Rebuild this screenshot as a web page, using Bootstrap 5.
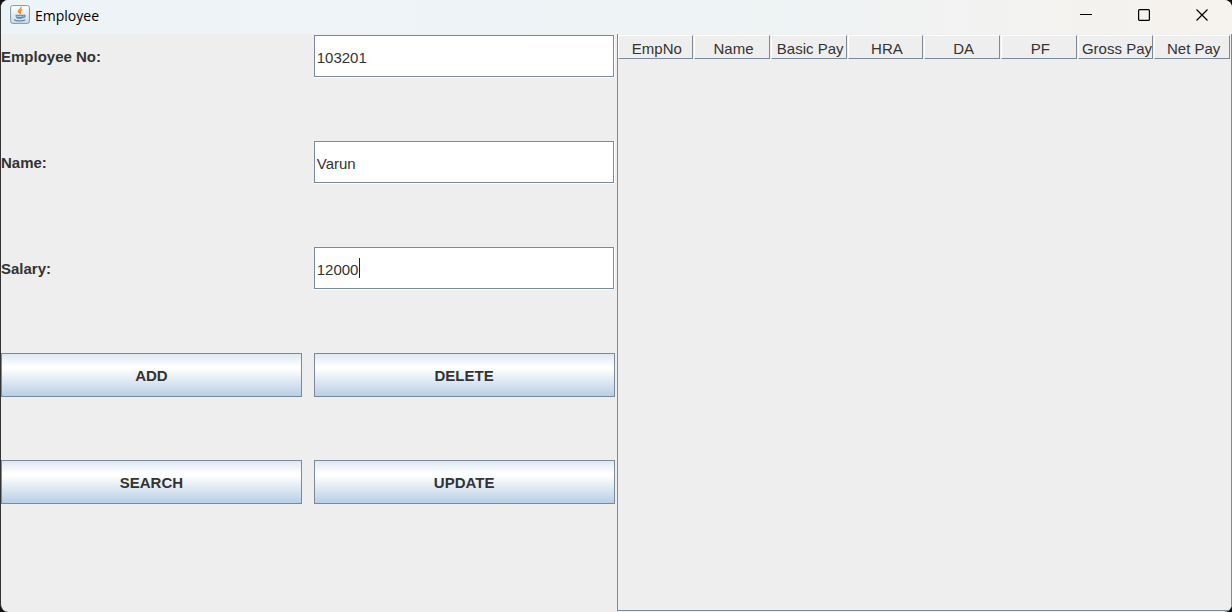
<!DOCTYPE html>
<html lang="en">
<head>
<meta charset="utf-8">
<meta name="viewport" content="width=device-width, initial-scale=1">
<title>Employee</title>
<link href="https://cdn.jsdelivr.net/npm/bootstrap@5.3.0/dist/css/bootstrap.min.css" rel="stylesheet">
<style>
  :root { --line: #7a8a99; --panel: #eeeeee; --ink: #333333; }
  body { background: #111; font: 15px/18px "Liberation Sans", Arial, sans-serif; color: var(--ink); }
  .app-window { background: var(--panel); border-left: 1px solid #333; border-radius: 8px; overflow: hidden; }
  .title-bar { height: 34px; padding: 0 1px 0 9px; background: linear-gradient(90deg, #edf4f8, #eef3f5 60%, #f6f2ed); color: #000; }
  .title-text { font: 14px/20px "Open Sans", "Noto Sans", sans-serif; padding: 6px 0 0 5px; }
  .win-btn { width: 58px; height: 30px; padding: 0; border: 0; background: none; display: flex; align-items: center; justify-content: center; }
  .form-grid { display: grid; grid-template-columns: 1fr 1fr; column-gap: 12px; row-gap: 63px; padding: 1px 2px 0 0; align-content: start; }
  .form-grid label { font-weight: 700; align-self: center; padding-top: 1px; }
  .metal-field { height: 43px; border-bottom: 1px solid #fff; border-right: 1px solid #fff; }
  .metal-field input { width: 100%; height: 42px; border: 1px solid var(--line); border-radius: 0; padding: 2px 2px 0; font: inherit; color: var(--ink); background: #fff; outline: 0; display: block; }
  .caret { left: 45px; top: 11px; width: 1px; height: 20px; background: #222; }
  .metal-btn { height: 44px; border: 1px solid var(--line); border-radius: 0; padding: 1px 0 0; font: inherit; font-weight: 700; color: var(--ink); background: linear-gradient(#dde8f3 0, #fff 30%, #fff 34%, #dbe6f1 68%, #b8cfe5 100%); }
  .table-pane { border: solid var(--line); border-width: 0 1px 1px; margin-bottom: 1px; }
  .metal-table { width: 100%; table-layout: fixed; border-collapse: separate; border-spacing: 0; }
  .metal-table th { height: 25px; padding: 1px 0 0; font-weight: 400; text-align: center; white-space: nowrap; }
  .metal-table th span { display: block; height: 24px; margin-right: 1px; padding: 4px 0 0 3px; border: solid; border-width: 1px; border-color: #fff var(--line) var(--line) #fff; }
</style>
</head>
<body>
<div class="app-window d-flex flex-column min-vh-100">
  <header class="title-bar d-flex align-items-start">
    <svg class="mt-1 flex-shrink-0" width="20" height="21" viewBox="0 0 20 21" aria-hidden="true">
      <defs><linearGradient id="tile" x1="0" y1="0" x2="0" y2="1"><stop stop-color="#fff"/><stop offset="1" stop-color="#ccdbe5"/></linearGradient></defs>
      <rect x=".6" y="1.6" width="18.8" height="17.8" rx="2" fill="url(#tile)" stroke="#8496a4"/>
      <path d="M10.8 3c1.400 2-3.200 2.800-2.500 4.500.3.900.9 1.200 1.500 1.900M12.300 5.700c-2 .8-3 1.600-2 2.700.5.500.3 1-.2 1.400" fill="none" stroke="#ee8633" stroke-width="1.400"/>
      <path d="M5.500 10.800h8c0 2.600-1 4-2.500 4H8c-1.600 0-2.500-1.400-2.500-4z" fill="#6289a5"/>
      <path d="M13.400 11.300c2.600-.6 2.300 2.200-.8 2.400M4 15.800c2.800 1.500 8.500 1.500 11.300 0" fill="none" stroke="#6289a5" stroke-width="1.200"/>
      <path d="M6.500 12.300h5.500" stroke="#dce8ef" stroke-width=".8"/>
    </svg>
    <span class="title-text" id="win-title">Employee</span>
    <div class="d-flex ms-auto">
      <button class="win-btn" type="button" aria-label="Minimize"><svg width="12" height="12" viewBox="0 0 12 12"><path d="M0 5.500h12" stroke="#000"/></svg></button>
      <button class="win-btn" type="button" aria-label="Maximize"><svg width="12" height="12" viewBox="0 0 12 12"><rect x=".6" y=".6" width="10.800" height="10.800" rx="1" fill="none" stroke="#000" stroke-width="1.200"/></svg></button>
      <button class="win-btn" type="button" aria-label="Close"><svg width="12" height="12" viewBox="0 0 12 12"><path d="M.5.5l11 11M11.500.5l-11 11" stroke="#000" stroke-width="1.200"/></svg></button>
    </div>
  </header>
  <main class="row g-0 flex-grow-1">
    <form class="col-6 form-grid" aria-labelledby="win-title">
      <label for="empNo">Employee No:</label>
      <div class="metal-field"><input id="empNo" type="text" value="103201"></div>
      <label for="empName">Name:</label>
      <div class="metal-field"><input id="empName" type="text" value="Varun"></div>
      <label for="salary">Salary:</label>
      <div class="metal-field position-relative"><input id="salary" type="text" value="12000"><span class="caret position-absolute"></span></div>
      <button class="metal-btn" type="button">ADD</button>
      <button class="metal-btn" type="button">DELETE</button>
      <button class="metal-btn" type="button">SEARCH</button>
      <button class="metal-btn" type="button">UPDATE</button>
    </form>
    <section class="col-6 d-flex">
      <div class="table-pane flex-fill">
        <table class="metal-table">
          <thead><tr>
            <th scope="col"><span>EmpNo</span></th><th scope="col"><span>Name</span></th><th scope="col"><span>Basic Pay</span></th><th scope="col"><span>HRA</span></th><th scope="col"><span>DA</span></th><th scope="col"><span>PF</span></th><th scope="col"><span>Gross Pay</span></th><th scope="col"><span>Net Pay</span></th>
          </tr></thead>
          <tbody></tbody>
        </table>
      </div>
    </section>
  </main>
</div>
</body>
</html>
